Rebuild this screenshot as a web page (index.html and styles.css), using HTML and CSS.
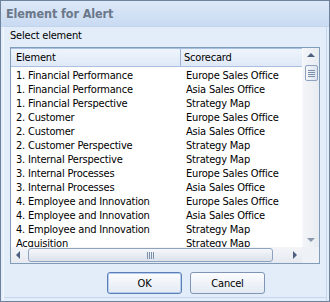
FILE: index.html
```html
<!DOCTYPE html>
<html>
<head>
<meta charset="utf-8">
<link rel="stylesheet" href="styles.css">
</head>
<body>
<div class="window">
  <div class="titlebar">Element for Alert</div>
  <div class="content">
    <div class="label">Select element</div>
    <div class="listbox">
      <div class="main">
        <div class="header">
          <div class="hcell c1">Element</div>
          <div class="hcell c2">Scorecard</div>
        </div>
        <div class="rows">
          <div class="row"><span class="c1">1. Financial Performance</span><span class="c2">Europe Sales Office</span></div>
          <div class="row"><span class="c1">1. Financial Performance</span><span class="c2">Asia Sales Office</span></div>
          <div class="row"><span class="c1">1. Financial Perspective</span><span class="c2">Strategy Map</span></div>
          <div class="row"><span class="c1">2. Customer</span><span class="c2">Europe Sales Office</span></div>
          <div class="row"><span class="c1">2. Customer</span><span class="c2">Asia Sales Office</span></div>
          <div class="row"><span class="c1">2. Customer Perspective</span><span class="c2">Strategy Map</span></div>
          <div class="row"><span class="c1">3. Internal Perspective</span><span class="c2">Strategy Map</span></div>
          <div class="row"><span class="c1">3. Internal Processes</span><span class="c2">Europe Sales Office</span></div>
          <div class="row"><span class="c1">3. Internal Processes</span><span class="c2">Asia Sales Office</span></div>
          <div class="row"><span class="c1">4. Employee and Innovation</span><span class="c2">Europe Sales Office</span></div>
          <div class="row"><span class="c1">4. Employee and Innovation</span><span class="c2">Asia Sales Office</span></div>
          <div class="row"><span class="c1">4. Employee and Innovation</span><span class="c2">Strategy Map</span></div>
          <div class="row last"><span class="c1">Acquisition</span><span class="c2">Strategy Map</span></div>
        </div>
      </div>
      <div class="vscroll">
        <div class="arrow-up"></div>
        <div class="vthumb"><span></span><span></span><span></span><span></span></div>
        <div class="vtrack"></div>
        <div class="arrow-down"></div>
      </div>
      <div class="hscroll">
        <div class="arrow-left"></div>
        <div class="hthumb"><span></span><span></span><span></span><span></span></div>
        <div class="arrow-right"></div>
      </div>
      <div class="corner"></div>
    </div>
    <div class="buttons">
      <button class="btn default">OK</button>
      <button class="btn">Cancel</button>
    </div>
  </div>
</div>
</body>
</html>
```
FILE: styles.css
```css
html, body {
  margin: 0;
  padding: 0;
  background: #e3edf9;
}
body {
  font-family: "DejaVu Sans Condensed", "DejaVu Sans", sans-serif;
  font-stretch: condensed;
  font-size: 11px;
  letter-spacing: -0.2px;
  color: #000;
}
.window {
  width: 330px;
  height: 302px;
  box-sizing: border-box;
  border: 1px solid #6f829c;
  background: #e3edf9;
  display: flex;
  flex-direction: column;
  overflow: hidden;
}
.titlebar {
  height: 25px;
  line-height: 25px;
  padding-left: 5px;
  font-weight: bold;
  font-size: 12.5px;
  letter-spacing: -0.1px;
  color: #6b778a;
  background: linear-gradient(#dce8f7, #c9dbf2);
  border-bottom: 1px solid #c3d5ec;
}
.content {
  flex: 1;
  display: flex;
  flex-direction: column;
  padding: 2px 9px 0 9px;
  box-shadow: inset 2px 0 0 #e3edf9, inset 3px 0 0 #f2f7fd, inset -2px 0 0 #e3edf9, inset -3px 0 0 #c6d6ec, inset 0 -3px 0 #e3edf9, inset 0 -4px 0 #c6d6ec;
}
.label {
  height: 14px;
  line-height: 14px;
  margin-bottom: 4px;
}
.listbox {
  height: 217px;
  box-sizing: border-box;
  border: 1px solid #7f9db9;
  background: #fff;
  display: grid;
  grid-template-columns: 291px 17px;
  grid-template-rows: 199px 16px;
}
.main {
  overflow: hidden;
}
.header {
  display: flex;
  height: 19px;
  line-height: 18px;
  box-sizing: border-box;
  background: linear-gradient(#eef4fc, #dfe9f7);
  border-top: 1px solid #a9c0e0;
  border-bottom: 1px solid #a9c0e0;
}
.hcell.c1 {
  width: 170px;
  padding-left: 5px;
  box-sizing: border-box;
  border-right: 1px solid #9fb6d6;
}
.hcell.c2 {
  padding-left: 3px;
}
.rows {
  padding-top: 2px;
}
.row {
  display: flex;
  height: 14px;
  line-height: 14px;
  white-space: nowrap;
}
.row.last {
  height: 12px;
  line-height: 12px;
  padding-top: 1px;
}
.row .c1 {
  width: 171px;
  padding-left: 5px;
  box-sizing: border-box;
  flex: none;
}
.row .c2 {
  padding-left: 4px;
}
.vscroll {
  grid-row: 1;
  grid-column: 2;
  background: linear-gradient(90deg, #f3f5f8, #e8ecf1);
  border-left: 1px solid #f7f9fb;
  display: flex;
  flex-direction: column;
  align-items: center;
}
.arrow-up {
  margin-top: 5px;
  width: 0;
  height: 0;
  border-left: 4px solid transparent;
  border-right: 4px solid transparent;
  border-bottom: 4px solid #4d5f80;
}
.vthumb {
  margin-top: 8px;
  width: 13px;
  height: 16px;
  box-sizing: border-box;
  border: 1px solid #8fa3c1;
  border-radius: 2px;
  background: linear-gradient(90deg, #f4f6fa, #dde4ee);
  display: flex;
  flex-direction: column;
  align-items: center;
  justify-content: center;
  gap: 1px;
}
.vthumb span {
  display: block;
  width: 7px;
  height: 1px;
  background: #7c8ea9;
}
.vtrack {
  flex: 1;
}
.arrow-down {
  margin-bottom: 5px;
  width: 0;
  height: 0;
  border-left: 4px solid transparent;
  border-right: 4px solid transparent;
  border-top: 4px solid #8a97ac;
}
.hscroll {
  grid-row: 2;
  grid-column: 1;
  background: linear-gradient(#f3f5f8, #e6eaf0);
  display: flex;
  align-items: center;
}
.arrow-left {
  margin-left: 5px;
  width: 0;
  height: 0;
  border-top: 4px solid transparent;
  border-bottom: 4px solid transparent;
  border-right: 4px solid #4d5f80;
}
.hthumb {
  margin-left: 8px;
  width: 245px;
  height: 14px;
  box-sizing: border-box;
  border: 1px solid #8fa3c1;
  border-radius: 3px;
  background: linear-gradient(#f5f7fa, #dbe2ec);
  display: flex;
  align-items: center;
  justify-content: center;
  gap: 1px;
}
.hthumb span {
  display: block;
  width: 1px;
  height: 7px;
  background: #7c8ea9;
}
.arrow-right {
  margin-left: 20px;
  width: 0;
  height: 0;
  border-top: 4px solid transparent;
  border-bottom: 4px solid transparent;
  border-left: 4px solid #4d5f80;
}
.corner {
  grid-row: 2;
  grid-column: 2;
  background: #eef1f5;
}
.buttons {
  display: flex;
  gap: 8px;
  padding-left: 97px;
  padding-top: 8px;
}
.btn {
  width: 75px;
  height: 22px;
  box-sizing: border-box;
  border: 1px solid #8094b4;
  border-radius: 3px;
  background: linear-gradient(#fbfcfe, #e3eaf3);
  font-family: inherit;
  font-stretch: condensed;
  font-size: 11px;
  letter-spacing: -0.2px;
  color: #000;
  padding: 0;
}
.btn.default {
  border-color: #5a7fb8;
  box-shadow: inset 0 0 0 1px #b7cdec;
}
```
